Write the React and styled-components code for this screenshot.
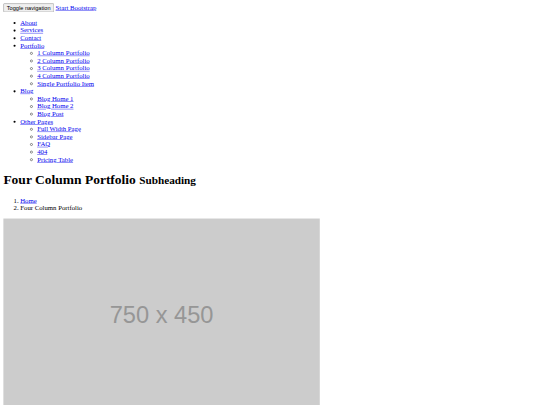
import React from "react";
import styled, { createGlobalStyle } from "styled-components";

const GlobalStyle = createGlobalStyle`
  html, body {
    overflow: hidden;
  }
  body {
    margin: 0;
    background: #fff;
    color: #000;
    font-family: "Liberation Serif", "Times New Roman", serif;
  }
  a {
    color: #0000ee;
  }
`;

// the reference is a 1280px-wide page photographed at 540px
const Page = styled.div`
  width: 1280px;
  box-sizing: border-box;
  transform: scale(0.421875);
  transform-origin: 0 0;
  padding: 8px;
  font-size: 16px;
`;

const NavHeader = styled.div`
  display: block;
`;

const Toggle = styled.button`
  font-family: "Liberation Sans", Arial, sans-serif;
  font-size: 13.333px;
  padding: 1px 6px;
  margin-right: 4px;
`;

const Menu = styled.ul`
  margin: 16px 0;
  padding-left: 40px;
  list-style: disc;
`;

const SubMenu = styled.ul`
  margin: 0;
  padding-left: 40px;
  list-style: circle;
`;

const Title = styled.h1`
  font-size: 32px;
  margin: 21px 0;
  small {
    font-size: 83%;
  }
`;

const Crumbs = styled.ol`
  margin: 16px 0;
  padding-left: 40px;
`;

const ThumbLink = styled.a`
  display: block;
  text-decoration: none;
`;

const Placeholder = styled.div`
  width: 750px;
  height: 450px;
  background: #cccccc;
  color: #969696;
  font-family: "Liberation Sans", Arial, sans-serif;
  font-size: 56px;
  display: flex;
  align-items: center;
  justify-content: center;
  padding-top: 6px;
  box-sizing: border-box;
`;

const menu = [
  { label: "About" },
  { label: "Services" },
  { label: "Contact" },
  {
    label: "Portfolio",
    items: [
      "1 Column Portfolio",
      "2 Column Portfolio",
      "3 Column Portfolio",
      "4 Column Portfolio",
      "Single Portfolio Item",
    ],
  },
  { label: "Blog", items: ["Blog Home 1", "Blog Home 2", "Blog Post"] },
  {
    label: "Other Pages",
    items: ["Full Width Page", "Sidebar Page", "FAQ", "404", "Pricing Table"],
  },
];

const App = () => {
  return (
    <>
      <GlobalStyle />
      <Page>
        <nav>
          <NavHeader>
            <Toggle>Toggle navigation</Toggle>
            <a href="#">Start Bootstrap</a>
          </NavHeader>
          <Menu>
            {menu.map((m) => (
              <li key={m.label}>
                <a href="#">{m.label}</a>
                {m.items && (
                  <SubMenu>
                    {m.items.map((s) => (
                      <li key={s}>
                        <a href="#">{s}</a>
                      </li>
                    ))}
                  </SubMenu>
                )}
              </li>
            ))}
          </Menu>
        </nav>
        <Title>
          Four Column Portfolio <small>Subheading</small>
        </Title>
        <Crumbs>
          <li>
            <a href="#">Home</a>
          </li>
          <li>Four Column Portfolio</li>
        </Crumbs>
        <ThumbLink href="#">
          <Placeholder>750 x 450</Placeholder>
        </ThumbLink>
      </Page>
    </>
  );
};

export default App;
